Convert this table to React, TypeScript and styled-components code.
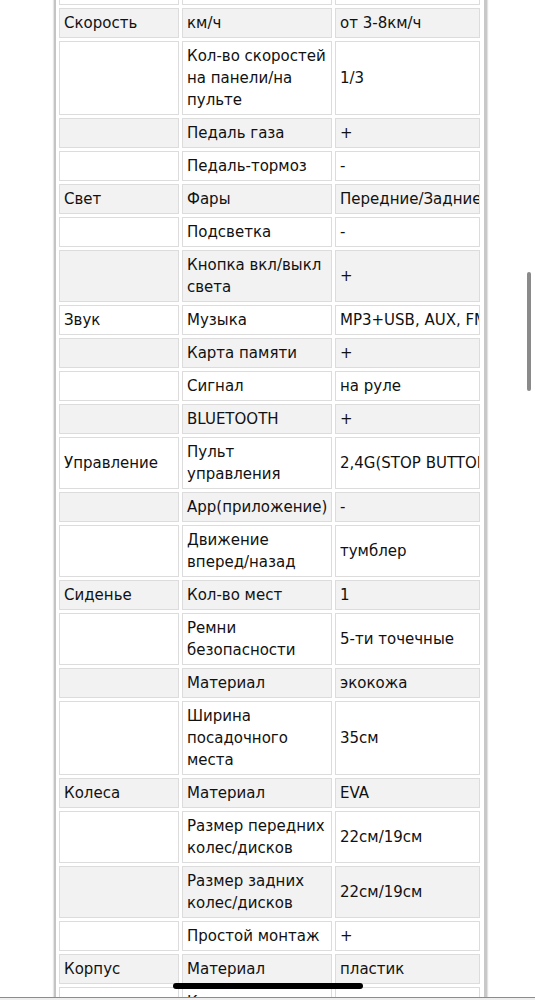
import React from "react";
import styled, { createGlobalStyle } from "styled-components";

const GlobalStyle = createGlobalStyle`
  html, body {
    margin: 0;
    padding: 0;
    background: #ffffff;
    overflow: hidden;
  }
  body {
    font-family: "DejaVu Sans", Verdana, sans-serif;
    color: #111111;
  }
`;

const Page = styled.div`
  width: 535px;
  height: 1000px;
  overflow: hidden;
  background: #ffffff;
`;

const Frame = styled.div`
  margin: -28px 0 0 54px;
  width: 428px;
  border-left: 2px solid #c4c4c4;
  border-right: 3px solid #c8c8c8;
  box-shadow: 1px 0 1px #e2e2e2, -1px 0 1px #e6e6e6;
  background: #ffffff;
`;

const Table = styled.table`
  border-collapse: separate;
  border-spacing: 3px;
  table-layout: fixed;
  width: 427px;
  font-size: 15px;
  line-height: 22px;
`;

const Row = styled.tr<{ $shade: boolean }>`
  background: transparent;
  & > td {
    background: ${(p) => (p.$shade ? "#f2f2f2" : "#ffffff")};
  }
`;

const Cell = styled.td<{ $nowrap?: boolean }>`
  border: 1px solid #dcdcdc;
  padding: 3px 4px;
  vertical-align: middle;
  overflow: hidden;
  white-space: ${(p) => (p.$nowrap ? "nowrap" : "normal")};
  height: 22px;
`;

const Scrollbar = styled.div`
  position: fixed;
  left: 527px;
  top: 272px;
  width: 4px;
  height: 119px;
  border-radius: 2px;
  background: #8a8a8a;
`;

const BottomEdge = styled.div`
  position: fixed;
  left: 0;
  right: 0;
  bottom: 0;
  height: 2px;
  border-top: 1px solid #8c8c8c;
  background: #eeeeee;
`;

const HomeIndicator = styled.div`
  position: fixed;
  left: 173px;
  top: 983px;
  width: 190px;
  height: 6px;
  border-radius: 3px;
  background: #000000;
`;

const rows: [string, string, string][] = [
  ["", "", ""],
  ["Скорость", "км/ч", "от 3-8км/ч"],
  ["", "Кол-во скоростей на панели/на пульте", "1/3"],
  ["", "Педаль газа", "+"],
  ["", "Педаль-тормоз", "-"],
  ["Свет", "Фары", "Передние/Задние"],
  ["", "Подсветка", "-"],
  ["", "Кнопка вкл/выкл света", "+"],
  ["Звук", "Музыка", "MP3+USB, AUX, FM"],
  ["", "Карта памяти", "+"],
  ["", "Сигнал", "на руле"],
  ["", "BLUETOOTH", "+"],
  ["Управление", "Пульт управления", "2,4G(STOP BUTTON)"],
  ["", "App(приложение)", "-"],
  ["", "Движение вперед/назад", "тумблер"],
  ["Сиденье", "Кол-во мест", "1"],
  ["", "Ремни безопасности", "5-ти точечные"],
  ["", "Материал", "экокожа"],
  ["", "Ширина посадочного места", "35см"],
  ["Колеса", "Материал", "EVA"],
  ["", "Размер передних колес/дисков", "22см/19см"],
  ["", "Размер задних колес/дисков", "22см/19см"],
  ["", "Простой монтаж", "+"],
  ["Корпус", "Материал", "пластик"],
  ["", "Крыша", ""],
];

export default function App() {
  return (
    <Page>
      <GlobalStyle />
      <Frame>
        <Table>
          <colgroup>
            <col style={{ width: 120 }} />
            <col style={{ width: 150 }} />
            <col style={{ width: 145 }} />
          </colgroup>
          <tbody>
            {rows.map((r, i) => (
              <Row key={i} $shade={i % 2 === 1}>
                <Cell>{r[0]}</Cell>
                <Cell>{r[1]}</Cell>
                <Cell $nowrap>{r[2]}</Cell>
              </Row>
            ))}
          </tbody>
        </Table>
      </Frame>
      <Scrollbar />
      <BottomEdge />
      <HomeIndicator />
    </Page>
  );
}
